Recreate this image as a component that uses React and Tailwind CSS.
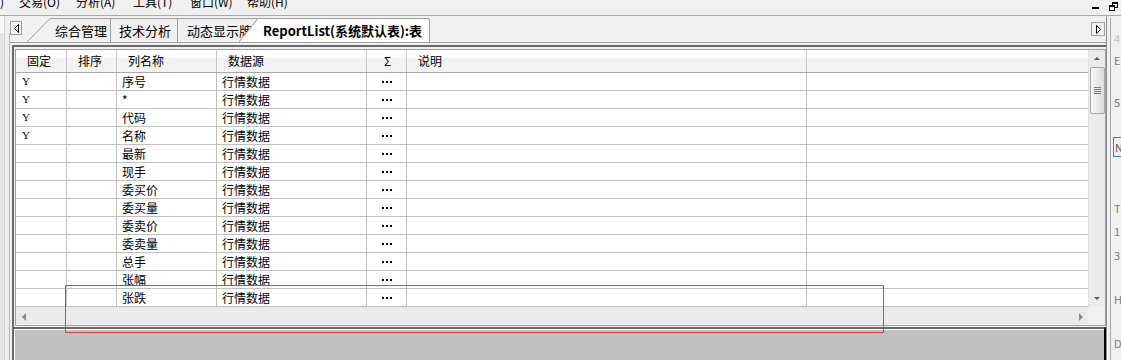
import React from 'react';

const menus = ['交易(O)', '分析(A)', '工具(T)', '窗口(W)', '帮助(H)'];

const rows = [
  ['Y', '序号'],
  ['Y', '*'],
  ['Y', '代码'],
  ['Y', '名称'],
  ['', '最新'],
  ['', '现手'],
  ['', '委买价'],
  ['', '委买量'],
  ['', '委卖价'],
  ['', '委卖量'],
  ['', '总手'],
  ['', '张幅'],
  ['', '张跌'],
];

function Dots() {
  return (
    <div className="flex gap-[2px]">
      <span className="w-[2px] h-[2px] bg-black" />
      <span className="w-[2px] h-[2px] bg-black" />
      <span className="w-[2px] h-[2px] bg-black" />
    </div>
  );
}

function HeaderRow() {
  const cell = 'h-full flex items-center shrink-0 border-r border-[#c8c8c8]';
  return (
    <div className="h-[23px] flex border-b border-[#a9a9a9] bg-[linear-gradient(to_bottom,#ffffff_0,#ffffff_8px,#f3f3f3_8px)] text-[12px]">
      <div className={`${cell} w-[51px] pl-[11px]`}>固定</div>
      <div className={`${cell} w-[50px] pl-[11px]`}>排序</div>
      <div className={`${cell} w-[100px] pl-[11px]`}>列名称</div>
      <div className={`${cell} w-[150px] pl-[11px]`}>数据源</div>
      <div className={`${cell} w-[40px] justify-center pl-[2px]`}>Σ</div>
      <div className={`${cell} w-[400px] pl-[11px]`}>说明</div>
      <div className="flex-1" />
    </div>
  );
}

function DataRow({ fixed, name }) {
  const cell = 'h-full flex items-center shrink-0 border-r border-[#c0c0c0]';
  return (
    <div className="h-[18px] flex border-b border-[#c0c0c0] bg-white text-[12px]">
      <div className={`${cell} w-[51px] pl-[6px] font-['Liberation_Serif',serif] text-[11px]`}>{fixed}</div>
      <div className={`${cell} w-[50px]`} />
      <div className={`${cell} w-[100px] pl-[5px]`}>{name}</div>
      <div className={`${cell} w-[150px] pl-[5px]`}>行情数据</div>
      <div className={`${cell} w-[40px] justify-center`}>
        <Dots />
      </div>
      <div className={`${cell} w-[400px]`} />
      <div className="flex-1" />
    </div>
  );
}

function VScroll() {
  return (
    <div className="w-[17px] shrink-0 bg-[#ebebeb] border-l border-[#e0e0e0] flex flex-col items-center">
      <div className="h-[17px] flex items-center justify-center">
        <div className="w-0 h-0 border-x-[3px] border-x-transparent border-b-[3px] border-b-[#5a5a5a]" />
      </div>
      <div className="w-[15px] h-[47px] rounded-[2px] border border-[#a8a8a8] bg-gradient-to-r from-[#f8f8f8] to-[#dcdcdc] flex flex-col items-center justify-center gap-[1px]">
        <span className="w-[7px] h-px bg-[#7a7a7a]" />
        <span className="w-[7px] h-px bg-[#7a7a7a]" />
        <span className="w-[7px] h-px bg-[#7a7a7a]" />
        <span className="w-[7px] h-px bg-[#7a7a7a]" />
      </div>
      <div className="flex-1" />
      <div className="h-[17px] flex items-center justify-center">
        <div className="w-0 h-0 border-x-[3px] border-x-transparent border-t-[3px] border-t-[#5a5a5a]" />
      </div>
    </div>
  );
}

export default function App() {
  return (
    <div className="relative w-[1121px] h-[360px] overflow-hidden bg-[#f0f0f0] text-black font-['Noto_Sans_CJK_SC',sans-serif]">
      {/* menu bar, cut off at the top */}
      <div className="h-[16px] border-b border-[#a9a9a9] flex items-start overflow-hidden">
        <div className="flex -mt-[4px] text-[12px] leading-[12px]">
          <span className="w-[19px]">)</span>
          {menus.map((m) => (
            <span key={m} className="w-[57px]">
              {m}
            </span>
          ))}
        </div>
        <div className="ml-auto mr-[3px] flex items-start">
          <div className="mt-[7px] w-[7px] h-[2px] bg-black" />
          <svg className="ml-[10px] mt-[2px]" width="9" height="9" viewBox="0 0 9 9">
            <rect x="3.5" y="0.5" width="5" height="5" fill="none" stroke="#000" />
            <rect x="3" y="1" width="6" height="1" fill="#000" />
            <rect x="0.5" y="3.5" width="5" height="5" fill="#f0f0f0" stroke="#000" />
            <rect x="0" y="4" width="6" height="1" fill="#000" />
          </svg>
        </div>
      </div>

      <div className="flex h-[344px]">
        {/* left strip */}
        <div className="w-[10px] shrink-0 flex">
          <div className="w-[4px] flex flex-col">
            <div className="h-[17px] bg-[#fafafa]" />
            <div className="flex-1 bg-[#e4e4e4]" />
          </div>
          <div className="w-px bg-[#d4d4d4]" />
          <div className="flex-1" />
          <div className="w-px bg-[#b4b4b4] mt-[17px]" />
        </div>

        {/* main */}
        <div className="w-[1097px] shrink-0 flex flex-col border-r border-[#8c8c8c]">
          {/* tab bar */}
          <div className="h-[27px] flex items-end border-b border-[#a0a0a0]">
            <div className="self-start mt-[5px] w-[12px] h-[14px] border border-[#a0a0a0] flex items-center justify-center">
              <svg width="5" height="9" viewBox="0 0 5 9">
                <path d="M4.5 0.5 L0.5 4.5 L4.5 8.5 Z" fill="none" stroke="#000" />
              </svg>
            </div>
            <div className="ml-[5px] flex items-end text-[13px]">
              <svg className="block shrink-0" width="23" height="24" viewBox="0 0 23 24">
                <line x1="0" y1="24" x2="23" y2="0.5" stroke="#a0a0a0" />
              </svg>
              <div className="h-[24px] w-[61px] shrink-0 pl-[5px] flex items-center border-t border-r border-[#a0a0a0]">综合管理</div>
              <div className="h-[24px] w-[67px] shrink-0 pl-[8px] flex items-center border-t border-r border-[#a0a0a0]">技术分析</div>
              <div className="h-[24px] w-[80px] shrink-0 pl-[9px] flex items-center border-t border-[#a0a0a0] whitespace-nowrap">动态显示牌</div>
              <div className="-ml-[19px] flex items-end">
                <svg className="block shrink-0" width="19" height="24" viewBox="0 0 19 24">
                  <polygon points="0,24 19,0 19,24" fill="#ffffff" />
                  <line x1="0" y1="24" x2="19" y2="0.5" stroke="#a0a0a0" />
                </svg>
                <div className="h-[24px] w-[172px] shrink-0 pl-[5px] flex items-center bg-white border-t border-r border-[#a0a0a0] rounded-tr-[3px] font-bold whitespace-nowrap">
                  ReportList(系统默认表):表
                </div>
              </div>
            </div>
            <div className="ml-auto mr-[1px] self-start mt-[6px] w-[14px] h-[14px] border border-[#a0a0a0] flex items-center justify-center">
              <svg width="5" height="9" viewBox="0 0 5 9">
                <path d="M0.5 0.5 L4.5 4.5 L0.5 8.5 Z" fill="none" stroke="#000" />
              </svg>
            </div>
          </div>

          {/* grid panel */}
          <div className="ml-[2px] mt-[2px] border-l-2 border-t-2 border-[#696969] pl-px pt-[2px] pb-px">
            <div className="border border-[#a0a0a0] flex flex-col">
              <div className="flex">
                <div className="w-[1072px] shrink-0 bg-white">
                  <HeaderRow />
                  {rows.map(([fixed, name]) => (
                    <DataRow key={name} fixed={fixed} name={name} />
                  ))}
                </div>
                <VScroll />
              </div>
              <div className="flex h-[18px]">
                <div className="w-[1072px] shrink-0 bg-[#ebebeb] border-t border-[#e2e2e2] flex items-center justify-between pl-[6px] pr-[5px]">
                  <div className="w-0 h-0 border-y-[4px] border-y-transparent border-r-[4px] border-r-[#8a8a8a]" />
                  <div className="w-0 h-0 border-y-[4px] border-y-transparent border-l-[4px] border-l-[#8a8a8a]" />
                </div>
                <div className="w-[17px] shrink-0 bg-[#f0f0f0]" />
              </div>
            </div>
          </div>

          {/* bottom gray panel */}
          <div className="ml-[2px] flex-1 flex border-t-2 border-l-2 border-[#696969] border-r-2 border-r-black">
            <div className="flex-1 border-t border-l border-white bg-[#c0c0c0]" />
          </div>
        </div>

        {/* right strip, clipped neighbour panel */}
        <div className="w-[14px] shrink-0 flex overflow-hidden">
          <div className="w-[3px] shrink-0" />
          <div className="w-px shrink-0 bg-[#a9a9a9] mt-[2px]" />
          <div className="flex-1 flex flex-col pl-[3px] text-[11px] leading-[10px] text-[#7a7a7a] overflow-hidden whitespace-nowrap">
            <span className="mt-[17px] text-[#c0c0c0]">4</span>
            <span className="mt-[12px]">E</span>
            <span className="mt-[32px]">5</span>
            <span className="mt-[30px] -ml-[1px] h-[20px] w-[12px] border border-[#3c7fd1] pl-[1px] flex items-center text-[#555]">N</span>
            <span className="mt-[46px]">T</span>
            <span className="mt-[13px]">1</span>
            <span className="mt-[14px]">3</span>
            <span className="mt-[34px]">H</span>
            <span className="mt-[34px]">D</span>
          </div>
        </div>
      </div>

      {/* red annotation box */}
      <div className="absolute left-[65px] top-[285px] w-[819px] h-[48px] border border-[#e53e3e] pointer-events-none" />
    </div>
  );
}
